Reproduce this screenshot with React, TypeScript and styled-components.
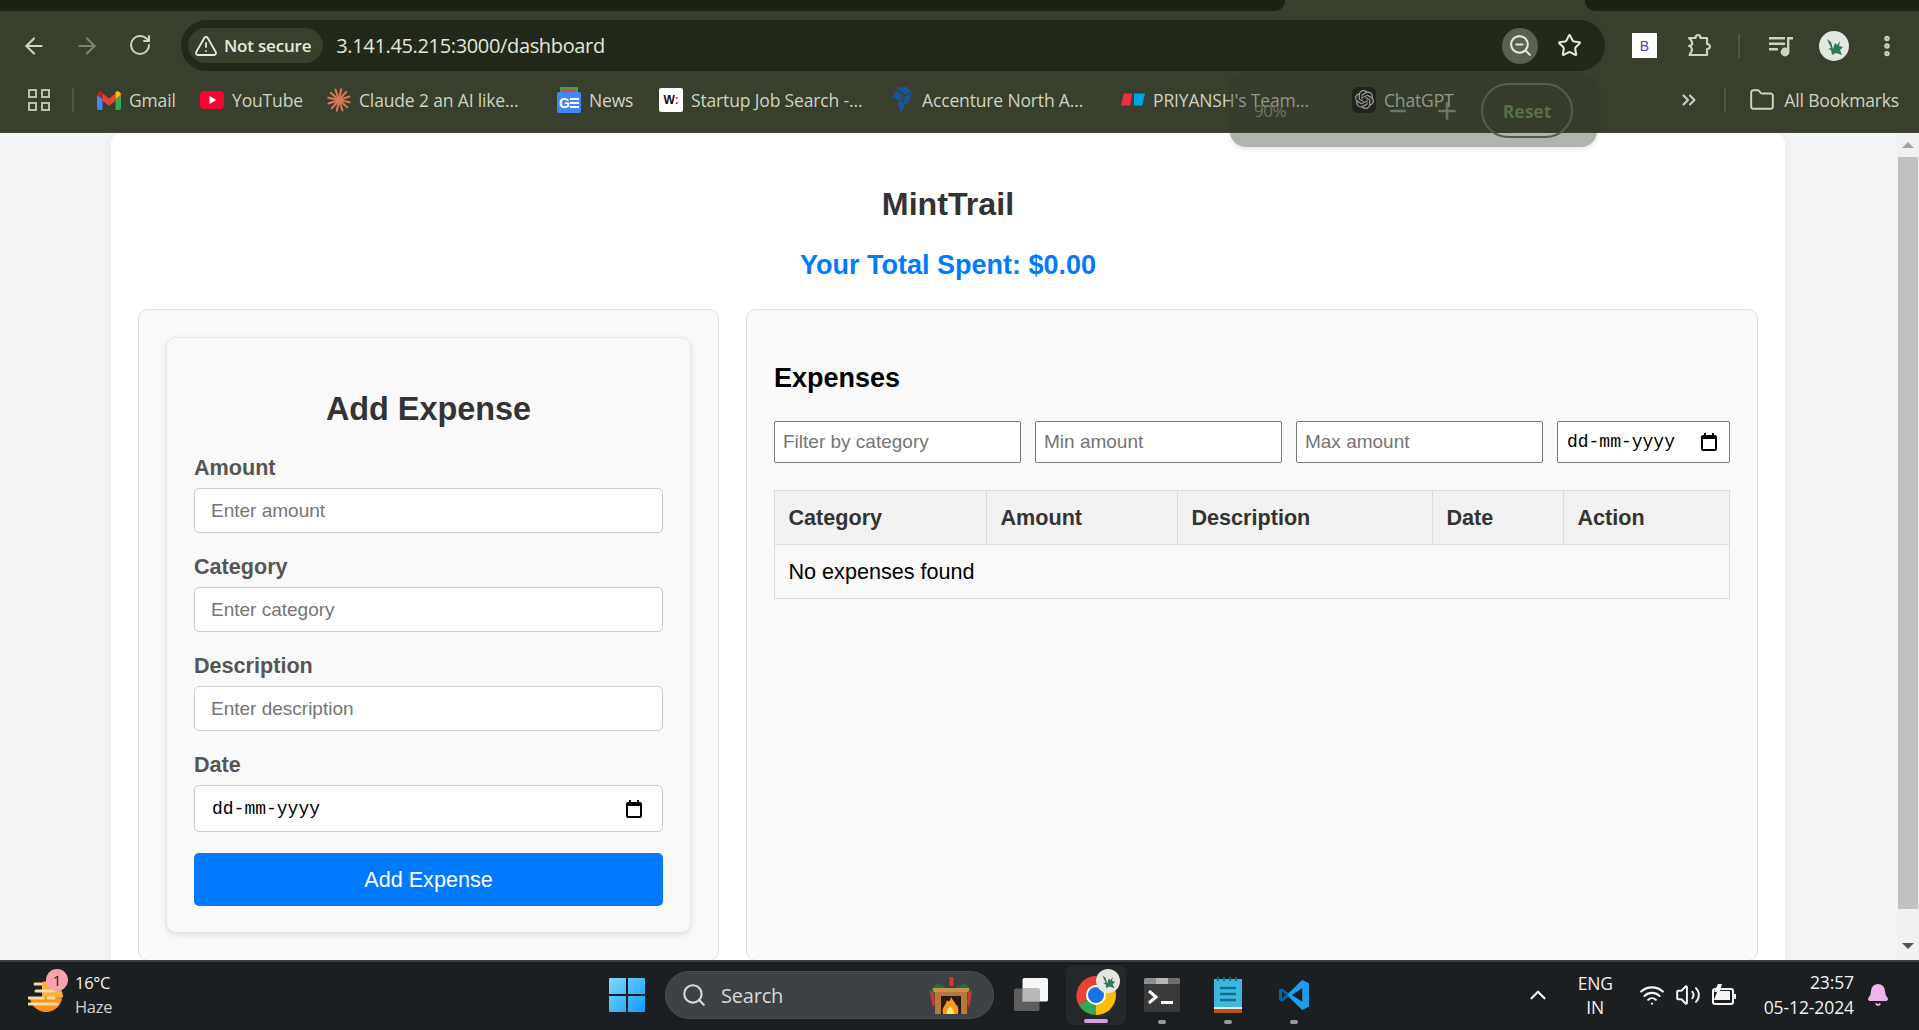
import React from 'react';
import styled, { createGlobalStyle } from 'styled-components';
import {
  ArrowLeft, ArrowRight, RotateCw, TriangleAlert, ZoomOut, Star, EllipsisVertical,
  ChevronsRight, Folder, ChevronUp, Wifi, Volume2, Bell, Search as SearchIcon, Minus, Plus,
} from 'lucide-react';
import { SiOpenai } from 'react-icons/si';

const GlobalStyle = createGlobalStyle`
  html, body, #root { margin: 0; height: 100%; }
  body { overflow: hidden; font-family: "Liberation Sans", Arial, sans-serif; background: #f4f5f7; }
  * { box-sizing: border-box; }
`;

const Frame = styled.div`
  position: relative;
  display: flex;
  flex-direction: column;
  height: 100vh;
  overflow: hidden;
`;

/* ---------- browser chrome ---------- */
const TabStrip = styled.div`
  display: flex;
  height: 11px;
  background: #383f2c;
`;
const StripDark = styled.div<{ $w?: number; $side: 'l' | 'r' }>`
  background: #1c2312;
  ${(p) => (p.$w ? `width: ${p.$w}px;` : 'flex: 1;')}
  border-radius: ${(p) => (p.$side === 'l' ? '0 0 10px 0' : '0 0 0 10px')};
`;
const TabGap = styled.div`
  width: 300px;
  background: #383f2c;
`;
const Toolbar = styled.div`
  display: flex;
  align-items: center;
  height: 60px;
  padding-top: 9px;
  background: #383f2c;
  color: #cdd3bf;
`;
const NavButton = styled.div<{ $dim?: boolean }>`
  width: 53px;
  display: flex;
  justify-content: center;
  color: ${(p) => (p.$dim ? '#7d8570' : '#cfd4c2')};
`;
const NavGroup = styled.div`
  display: flex;
  width: 181px;
  padding-left: 7px;
`;
const Omnibox = styled.div`
  display: flex;
  align-items: center;
  width: 1424px;
  height: 51px;
  border-radius: 26px;
  background: #22291a;
  padding: 0 9px 0 7px;
`;
const SecurityChip = styled.div`
  display: flex;
  align-items: center;
  gap: 6px;
  height: 35px;
  padding: 0 12px 0 6px;
  border-radius: 18px;
  background: #383f2c;
  color: #e6e9dc;
  font: 600 17px "Open Sans", sans-serif;
  letter-spacing: -0.2px;
`;
const UrlText = styled.div`
  margin-left: 13px;
  flex: 1;
  color: #e3e6da;
  font: 400 20px "Open Sans", sans-serif;
  letter-spacing: -0.35px;
`;
const ZoomBadge = styled.div`
  display: flex;
  align-items: center;
  justify-content: center;
  width: 36px;
  height: 36px;
  border-radius: 50%;
  background: #5a6150;
  color: #e3e6da;
`;
const StarBox = styled.div`
  display: flex;
  width: 62px;
  justify-content: center;
  color: #e3e6da;
  margin-right: -4px;
`;
const ToolIcons = styled.div`
  display: flex;
  align-items: center;
  flex: 1;
  padding-left: 27px;
`;
const ExtB = styled.div`
  display: flex;
  align-items: center;
  justify-content: center;
  width: 25px;
  height: 25px;
  background: #fff;
  color: #4a3fb5;
  font: 400 14px "Liberation Sans", sans-serif;
`;
const ToolSlot = styled.div<{ $ml: number }>`
  display: flex;
  margin-left: ${(p) => p.$ml}px;
  color: #cdd3bf;
`;
const VDivider = styled.div<{ $ml: number }>`
  width: 2px;
  height: 24px;
  margin-left: ${(p) => p.$ml}px;
  background: #505842;
`;
const BookmarkBar = styled.div`
  display: flex;
  align-items: center;
  height: 62px;
  padding: 0 0 4px 28px;
  background: #383f2c;
  border-bottom: 1px solid #3f4634;
`;
const BookmarkItem = styled.div<{ $w: number }>`
  display: flex;
  align-items: center;
  flex: none;
  width: ${(p) => p.$w}px;
  gap: 8px;
  color: #cfd3c4;
  font: 400 17.5px "Open Sans", sans-serif;
  letter-spacing: -0.15px;
  white-space: nowrap;
`;
const FavSlot = styled.div`
  display: flex;
  align-items: center;
  justify-content: center;
  flex: none;
  width: 24px;
  height: 24px;
`;
const BookmarkRight = styled.div`
  display: flex;
  align-items: center;
  margin-left: auto;
  color: #cfd3c4;
  padding-right: 20px;
  font: 400 17.5px "Open Sans", sans-serif;
  letter-spacing: -0.15px;
`;
const BookmarkLabel = styled.span`
  margin-left: 9px;
`;
const AppsDivider = styled(VDivider)`
  margin-right: 23px;
`;
const AppsGrid = styled.div`
  display: grid;
  grid-template-columns: 9px 9px;
  gap: 4px;
`;
const AppsCell = styled.span`
  width: 9px;
  height: 9px;
  border: 2px solid #b9bfac;
`;

/* zoom bubble */
const ZoomPopup = styled.div`
  position: absolute;
  z-index: 3;
  left: 1230px;
  top: 74px;
  width: 367px;
  height: 73px;
  border-radius: 16px;
  background: rgba(50, 55, 42, 0.38);
  box-shadow: 0 2px 5px rgba(0, 0, 0, 0.12);
  display: flex;
  align-items: center;
  color: #6f7565;
`;
const ZoomPct = styled.div`
  margin-left: 24px;
  width: 36px;
  font: 400 17px "Open Sans", sans-serif;
  letter-spacing: -0.5px;
`;
const ZoomBtn = styled.div<{ $ml: number }>`
  display: flex;
  margin-left: ${(p) => p.$ml}px;
`;
const ResetPill = styled.div`
  margin-left: 21px;
  display: flex;
  align-items: center;
  justify-content: center;
  width: 92px;
  height: 55px;
  border-radius: 28px;
  border: 2px solid #565d4a;
  color: #5a7044;
  font: 700 17.5px "Open Sans", sans-serif;
`;

/* ---------- page ---------- */
const Viewport = styled.div`
  display: flex;
  flex: 1;
  min-height: 0;
`;
const PageArea = styled.div`
  flex: 1;
  overflow: hidden;
  padding-left: 111px;
  background: #f4f5f7;
`;
const Container = styled.main`
  width: 1674px;
  min-height: 900px;
  padding: 0 27px;
  background: #fff;
  border-radius: 10px;
  box-shadow: 0 0 12px rgba(0, 0, 0, 0.06);
`;
const Title = styled.h1`
  margin: 0;
  padding-top: 53px;
  text-align: center;
  color: #333;
  font-size: 32.2px;
  line-height: 37px;
  font-weight: 700;
`;
const TotalSpent = styled.h2`
  margin: 0;
  padding-top: 27px;
  text-align: center;
  color: #007bff;
  font-size: 27px;
  line-height: 31px;
  font-weight: 700;
`;
const Columns = styled.div`
  display: flex;
  gap: 27px;
  margin-top: 28px;
`;
const Panel = styled.section<{ $w: number }>`
  flex: none;
  width: ${(p) => p.$w}px;
  height: 652px;
  padding: 27px;
  background: #f9f9f9;
  border: 1px solid #ddd;
  border-radius: 10px;
`;
const FormCard = styled.form`
  padding: 27px 27px 26px;
  background: #f9f9f9;
  border: 1px solid #e6e6e6;
  border-radius: 10px;
  box-shadow: 0 2px 6px rgba(0, 0, 0, 0.1);
`;
const FormTitle = styled.h2`
  margin: 26px 0 27px;
  text-align: center;
  color: #333;
  font-size: 32.4px;
  line-height: 37px;
  font-weight: 700;
`;
const Field = styled.div`
  margin-bottom: 21px;
`;
const FieldLabel = styled.label`
  display: block;
  margin-bottom: 8px;
  color: #555;
  font-size: 21.6px;
  line-height: 25px;
  font-weight: 700;
`;
const TextInput = styled.input`
  display: block;
  width: 100%;
  height: 45px;
  padding: 0 16px;
  background: #fff;
  border: 1px solid #ccc;
  border-radius: 5px;
  font: 400 19px "Liberation Sans", sans-serif;
  outline: none;
  &::placeholder { color: #757575; opacity: 1; }
`;
const DateBox = styled.div`
  display: flex;
  align-items: center;
  justify-content: space-between;
  width: 100%;
  height: 47px;
  padding: 0 20px 0 17px;
  background: #fff;
  border: 1px solid #ccc;
  border-radius: 5px;
  color: #000;
  font: 400 18px "Liberation Mono", monospace;
`;
const SubmitButton = styled.button`
  display: block;
  width: 100%;
  height: 53px;
  background: #007bff;
  border: 0;
  border-radius: 5px;
  color: #fff;
  font: 400 21.6px "Liberation Sans", sans-serif;
`;
const ExpensesTitle = styled.h2`
  margin: 26px 0 27px;
  color: #000;
  font-size: 27px;
  line-height: 31px;
  font-weight: 700;
`;
const Filters = styled.div`
  display: flex;
  gap: 14.4px;
  margin-bottom: 27px;
`;
const FilterInput = styled.input`
  flex: none;
  width: 246.6px;
  height: 42px;
  padding: 0 8px;
  background: #fff;
  border: 1px solid #767676;
  border-radius: 2px;
  font: 400 19px "Liberation Sans", sans-serif;
  outline: none;
  &::placeholder { color: #757575; opacity: 1; }
`;
const FilterDate = styled.div`
  display: flex;
  flex: 1;
  align-items: center;
  justify-content: space-between;
  height: 42px;
  padding: 0 12px 0 9px;
  background: #fff;
  border: 1px solid #767676;
  border-radius: 2px;
  color: #000;
  font: 400 18px "Liberation Mono", monospace;
`;
const Table = styled.table`
  width: 100%;
  table-layout: fixed;
  border-collapse: collapse;
  font-size: 21.6px;
`;
const HeadCell = styled.th<{ $w: number }>`
  width: ${(p) => p.$w}px;
  height: 54px;
  padding: 0 13.5px;
  text-align: left;
  color: #333;
  background: #f2f2f2;
  border: 1px solid #ddd;
  font-weight: 700;
`;
const BodyCell = styled.td`
  height: 54px;
  padding: 0 13.5px;
  color: #000;
  border: 1px solid #ddd;
`;

/* scrollbar */
const Scrollbar = styled.div`
  display: flex;
  flex-direction: column;
  align-items: center;
  flex: none;
  width: 22px;
  background: #f1f1f1;
`;
const ScrollArrow = styled.div<{ $down?: boolean }>`
  flex: none;
  width: 0;
  height: 0;
  margin: ${(p) => (p.$down ? '0 0 9px' : '9px 0 0')};
  border-left: 6px solid transparent;
  border-right: 6px solid transparent;
  ${(p) => (p.$down ? 'border-top: 6px solid #505050;' : 'border-bottom: 6px solid #a3a3a3;')}
`;
const ScrollThumb = styled.div`
  flex: none;
  width: 20px;
  height: 752px;
  margin: 9px 0 34px;
  background: #c1c1c1;
`;

/* ---------- taskbar ---------- */
const Taskbar = styled.footer`
  display: flex;
  align-items: center;
  flex: none;
  height: 70px;
  padding-bottom: 2px;
  background: #1c1f21;
  border-top: 2px solid #3b3e40;
  color: #f2f2f2;
  font: 400 17px "Open Sans", sans-serif;
`;
const Weather = styled.div`
  position: relative;
  display: flex;
  align-items: center;
  flex: none;
  width: 609px;
  padding-left: 28px;
  gap: 11px;
`;
const WeatherText = styled.div`
  line-height: 24px;
  font-size: 16.5px;
  letter-spacing: -0.3px;
`;
const WeatherSub = styled.div`
  color: #cfcfcf;
`;
const Badge = styled.div`
  position: absolute;
  left: 46px;
  top: -2px;
  width: 22px;
  height: 22px;
  border-radius: 50%;
  background: #f9a1ae;
  color: #222;
  font-size: 15px;
  line-height: 22px;
  text-align: center;
`;
const SearchPill = styled.div`
  display: flex;
  align-items: center;
  width: 329px;
  height: 48px;
  margin-left: 20px;
  padding: 0 18px 0 15px;
  border-radius: 24px;
  background: #3e4244;
  border: 1px solid #4a4e50;
  color: #d8d8d8;
  font-size: 20px;
  gap: 14px;
`;
const SearchLabel = styled.span`
  flex: 1;
  letter-spacing: -0.2px;
`;
const TaskSlot = styled.div<{ $ml: number; $w: number }>`
  position: relative;
  display: flex;
  align-items: center;
  justify-content: center;
  flex: none;
  margin-left: ${(p) => p.$ml}px;
  width: ${(p) => p.$w}px;
  height: 60px;
`;
const ActiveSlot = styled(TaskSlot)`
  background: #26292b;
  border-radius: 8px;
`;
const RunDot = styled.span`
  position: absolute;
  left: 50%;
  bottom: 1px;
  width: 8px;
  height: 4px;
  margin-left: -4px;
  border-radius: 2px;
  background: #9a9a9a;
`;
const ActiveBar = styled.span`
  position: absolute;
  left: 18px;
  bottom: 2px;
  width: 24px;
  height: 4px;
  border-radius: 2px;
  background: #d9a0e0;
`;
const Tray = styled.div`
  display: flex;
  align-items: center;
  flex: 1;
  justify-content: flex-end;
`;
const TrayItem = styled.div<{ $mr: number }>`
  display: flex;
  margin-right: ${(p) => p.$mr}px;
  color: #f5f5f5;
`;
const LangBlock = styled.div`
  margin-right: 26px;
  text-align: center;
  line-height: 24px;
  font-size: 17.5px;
  letter-spacing: -0.2px;
`;
const ClockBlock = styled.div`
  margin-right: 12px;
  text-align: right;
  line-height: 25px;
  font-size: 17.5px;
  letter-spacing: -0.1px;
`;

/* ---------- drawn icons ---------- */
const GmailIcon = () => (
  <svg width="24" height="20" viewBox="0 0 24 20">
    <path fill="#4285f4" d="M0 5v13a2 2 0 0 0 2 2h3.500V9z" />
    <path fill="#34a853" d="M24 5v13a2 2 0 0 1-2 2h-3.500V9z" />
    <path fill="#ea4335" d="M5.500 11V3.500L12 8.400l6.500-4.900V11L12 15.800z" />
    <path fill="#c5221f" d="M0 5c0-3 3.300-4.600 5.500-3V9z" />
    <path fill="#fbbc04" d="M24 5c0-3-3.300-4.600-5.500-3V9z" />
  </svg>
);
const YouTubeIcon = () => (
  <svg width="24" height="18" viewBox="0 0 24 18">
    <rect width="24" height="18" rx="4.500" fill="#ff0033" />
    <path fill="#fff" d="M9.500 5l7 4-7 4z" />
  </svg>
);
const ClaudeIcon = () => (
  <svg width="24" height="24" viewBox="0 0 24 24" stroke="#d97757" strokeWidth="2" strokeLinecap="round">
    {Array.from({ length: 12 }).map((_, i) => {
      const a = (i * Math.PI * 2) / 12 + 0.2;
      return <line key={i} x1={12} y1={12} x2={12 + Math.cos(a) * 11} y2={12 + Math.sin(a) * 11} />;
    })}
  </svg>
);
const NewsIcon = () => (
  <svg width="24" height="26" viewBox="0 0 24 26">
    <rect x="3" y="0" width="18" height="6" rx="1" fill="#34a853" />
    <rect x="5" y="2" width="14" height="5" fill="#ea4335" />
    <rect y="5" width="24" height="21" rx="2" fill="#4285f4" />
    <text x="2" y="21" fill="#fff" fontFamily="Liberation Sans" fontWeight="700" fontSize="14">G</text>
    <path fill="#fff" d="M13 11h9v2h-9zM13 15h9v2h-9zM13 19h9v2h-9z" />
  </svg>
);
const WSquare = styled.div`
  display: flex;
  align-items: center;
  justify-content: center;
  width: 24px;
  height: 24px;
  border-radius: 2px;
  background: #fff;
  color: #111;
  font: 700 12px "Liberation Sans", sans-serif;
`;
const WRed = styled.span`
  color: #d01f3c;
`;
const AccentureIcon = () => (
  <svg width="22" height="26" viewBox="0 0 24 30">
    <path fill="#17549b" d="M5 1l13-1 5 6-8 3zM0 11l6-7 8 6-5 6zM13 12l10-5-3 10-5 4zM7 19l5-5 3 9-4 7z" />
  </svg>
);
const MondayIcon = () => (
  <svg width="26" height="14" viewBox="0 0 26 14">
    <path fill="#f02d46" d="M3 0h9l-2 13H0z" />
    <path fill="#00a4e4" d="M14 0h12l-3 13h-9z" />
  </svg>
);
const ChatGptTile = styled.div`
  display: flex;
  align-items: center;
  justify-content: center;
  width: 24px;
  height: 26px;
  border-radius: 6px;
  background: #171717;
  color: #d9d9d9;
`;
const PuzzleIcon = () => (
  <svg width="26" height="26" viewBox="0 0 26 26" fill="none" stroke="#cdd3bf" strokeWidth="2.200" strokeLinejoin="round">
    <path d="M3 5h6.500c0-4 5-4 5 0H21v6c3.800 0 3.800 5 0 5v6H3.500l2-3.500c1.200-2.500 0-5-2.500-5.500l2.500-1C7 11 6 7 3 5z" />
  </svg>
);
const MediaIcon = () => (
  <svg width="26" height="24" viewBox="0 0 26 24" fill="#cdd3bf">
    <rect x="1" y="3" width="16" height="2.500" />
    <rect x="1" y="8.500" width="16" height="2.500" />
    <rect x="1" y="14" width="9" height="2.500" />
    <rect x="19" y="3" width="2.400" height="15" />
    <rect x="19" y="3" width="6" height="2.500" />
    <circle cx="17" cy="18" r="4.400" />
  </svg>
);
const CalendarIcon = () => (
  <svg width="16" height="18" viewBox="0 0 16 18">
    <path fill="#000" d="M3 0h2v2h6V0h2v2h1a2 2 0 0 1 2 2v12a2 2 0 0 1-2 2H2a2 2 0 0 1-2-2V4a2 2 0 0 1 2-2h1zM2 6v10h12V6z" />
  </svg>
);
const AvatarIcon = ({ size }: { size: number }) => (
  <svg width={size} height={size} viewBox="0 0 30 30">
    <circle cx="15" cy="15" r="15" fill="#e4e6e2" />
    <path fill="#2c7a57" d="M8 8l4 3 2 7 2-6 2 2 3-4-1 5 4 1-3 3 2 5-6-2-4 2-1-5-3-1 3-1z" />
  </svg>
);
const WeatherIcon = () => (
  <svg width="36" height="34" viewBox="0 0 36 34">
    <path fill="#f5941d" d="M2 19h32c0 8-7 15-16 15S2 27 2 19z" />
    <path fill="#f7b23b" d="M14 4a16 16 0 0 1 21 15H14z" />
    <path fill="none" stroke="#f4dd9c" strokeWidth="3" strokeLinecap="round" d="M7 6h6M8 13h18M1 20h14M20 20h6M1 26h28" />
  </svg>
);
const WindowsIcon = () => (
  <svg width="36" height="36" viewBox="0 0 36 36">
    <defs>
      <linearGradient id="winG" x1="0" y1="0" x2="1" y2="1">
        <stop offset="0" stopColor="#7fd8ff" />
        <stop offset="1" stopColor="#0f9bfa" />
      </linearGradient>
    </defs>
    <path fill="url(#winG)" d="M1 1h16v16H0V2a1 1 0 0 1 1-1zM19 1h16a1 1 0 0 1 1 1v15H19zM0 19h17v16H1a1 1 0 0 1-1-1zM19 19h17v15a1 1 0 0 1-1 1H19z" />
  </svg>
);
const FireplaceIcon = () => (
  <svg width="48" height="38" viewBox="0 0 48 38">
    <path fill="#2f6b3c" d="M2 16l8-9 12 6H26l12-6 8 9-5 4-5-5H12l-5 5z" />
    <rect x="22.500" y="1" width="4" height="9" rx="1" fill="#d8392b" />
    <rect x="6" y="12" width="36" height="4" fill="#c9924f" />
    <rect x="8" y="16" width="32" height="22" fill="#b5793c" />
    <rect x="14" y="20" width="20" height="18" fill="#2a1a10" />
    <path fill="#f59a1f" d="M16 38c-2-7 3-8 4-14 2 3 3 1 4-3 3 5 4 5 5 8 2 0 3 5 2 9z" />
    <path fill="#ffe27a" d="M20 38c-1-4 2-5 3-8 2 3 5 4 4 8z" />
    <path fill="#c93a2a" d="M3 17l4-2 1 12-2 5zM45 17l-4-2-1 12 2 5z" />
  </svg>
);
const TaskViewIcon = () => (
  <svg width="36" height="34" viewBox="0 0 36 36">
    <rect x="9" y="0" width="27" height="25" rx="2" fill="#f6f6f6" />
    <rect x="0" y="11" width="27" height="24" rx="2" fill="#6a6a6a" fillOpacity="0.85" />
    <rect x="9" y="11" width="18" height="14" fill="#b9b9b9" />
  </svg>
);
const ChromeIcon = () => (
  <svg width="48" height="48" viewBox="0 0 48 48">
    <path fill="#ea4335" d="M24 24L41.300 14A20 20 0 0 0 6.700 34Z" />
    <path fill="#fbbc04" d="M24 24L41.300 14A20 20 0 0 1 24 44Z" />
    <path fill="#34a853" d="M24 24L24 44A20 20 0 0 1 6.700 34Z" />
    <circle cx="24" cy="24" r="10" fill="#fff" />
    <circle cx="24" cy="24" r="8" fill="#1a73e8" />
  </svg>
);
const ChromeBadge = styled.div`
  position: absolute;
  right: 6px;
  top: 4px;
  display: flex;
`;
const TerminalIcon = () => (
  <svg width="36" height="34" viewBox="0 0 36 34">
    <rect width="36" height="34" rx="2" fill="#3a3a3a" />
    <path fill="#8f8f8f" d="M0 2a2 2 0 0 1 2-2h10v6H0z" />
    <path fill="#b5b5b5" d="M12 0h12v6H12z" />
    <path fill="#6f6f6f" d="M24 0h10a2 2 0 0 1 2 2v4H24z" />
    <path fill="none" stroke="#fff" strokeWidth="3" d="M5 13l7 6-7 6" />
    <rect x="17" y="23" width="12" height="3" fill="#fff" />
  </svg>
);
const NotepadIcon = () => (
  <svg width="28" height="36" viewBox="0 0 28 36">
    <rect y="2" width="28" height="30" fill="#3fb8de" />
    <rect y="30" width="28" height="2" fill="#e9e9e9" />
    <rect y="32" width="28" height="4" fill="#b3561a" />
    <path stroke="#0e6f96" strokeWidth="2" d="M4 0v4M10 0v4M16 0v4M22 0v4" />
    <path stroke="#0e6f96" strokeWidth="2.500" d="M6 11h16M6 17h16M6 23h16" />
  </svg>
);
const VsCodeIcon = () => (
  <svg width="38" height="40" viewBox="0 0 24 24">
    <path fill="#0065a9" d="M17.500 2 8.200 10.700 4 7.500 2 8.500v7l2 1 4.200-3.200L17.500 22z" />
    <path fill="#1f9cf0" d="M17.500 2 22 4.200v15.600L17.500 22 7.500 12z" />
    <path fill="#1c1f21" d="M17.500 7.500 10.700 12l6.800 4.500zM4 9.500 6.300 12 4 14.500z" />
  </svg>
);
const BatteryIcon = () => (
  <svg width="24" height="22" viewBox="0 0 24 22" fill="none" stroke="#f5f5f5" strokeWidth="2">
    <rect x="1" y="5" width="20" height="15" rx="2" />
    <rect x="21" y="10" width="3" height="5" fill="#f5f5f5" stroke="none" />
    <path fill="#f5f5f5" stroke="none" d="M6 0 2 8h3l-3 8 16 0V7H8l2-7z" />
  </svg>
);

const bookmarks = [
  { w: 103, label: 'Gmail', icon: <GmailIcon /> },
  { w: 127, label: 'YouTube', icon: <YouTubeIcon /> },
  { w: 230, label: 'Claude 2 an AI like...', icon: <ClaudeIcon /> },
  { w: 102, label: 'News', icon: <NewsIcon /> },
  { w: 231, label: 'Startup Job Search -...', icon: <WSquare>W<WRed>:</WRed></WSquare> },
  { w: 231, label: 'Accenture North A...', icon: <AccentureIcon /> },
  { w: 231, label: "PRIYANSH's Team...", icon: <MondayIcon /> },
  { w: 110, label: 'ChatGPT', icon: <ChatGptTile><SiOpenai size={19} /></ChatGptTile> },
];

const fields = [
  { label: 'Amount', placeholder: 'Enter amount' },
  { label: 'Category', placeholder: 'Enter category' },
  { label: 'Description', placeholder: 'Enter description' },
];

const columns = [
  { w: 212, label: 'Category' },
  { w: 191, label: 'Amount' },
  { w: 255, label: 'Description' },
  { w: 131, label: 'Date' },
  { w: 166, label: 'Action' },
];

export default function App() {
  return (
    <Frame>
      <GlobalStyle />
      <TabStrip>
        <StripDark $w={1285} $side="l" />
        <TabGap />
        <StripDark $side="r" />
      </TabStrip>
      <Toolbar>
        <NavGroup>
          <NavButton><ArrowLeft size={26} strokeWidth={2} /></NavButton>
          <NavButton $dim><ArrowRight size={26} strokeWidth={2} /></NavButton>
          <NavButton><RotateCw size={24} strokeWidth={2} /></NavButton>
        </NavGroup>
        <Omnibox>
          <SecurityChip><TriangleAlert size={24} strokeWidth={1.8} />Not secure</SecurityChip>
          <UrlText>3.141.45.215:3000/dashboard</UrlText>
          <ZoomBadge><ZoomOut size={25} strokeWidth={2} /></ZoomBadge>
          <StarBox><Star size={25} strokeWidth={2} /></StarBox>
        </Omnibox>
        <ToolIcons>
          <ExtB>B</ExtB>
          <ToolSlot $ml={29}><PuzzleIcon /></ToolSlot>
          <VDivider $ml={26} />
          <ToolSlot $ml={28}><MediaIcon /></ToolSlot>
          <ToolSlot $ml={25}><AvatarIcon size={30} /></ToolSlot>
          <ToolSlot $ml={25}><EllipsisVertical size={26} strokeWidth={3} /></ToolSlot>
        </ToolIcons>
      </Toolbar>
      <BookmarkBar>
        <AppsGrid>
          <AppsCell /><AppsCell /><AppsCell /><AppsCell />
        </AppsGrid>
        <AppsDivider $ml={22} />
        {bookmarks.map((b) => (
          <BookmarkItem key={b.label} $w={b.w}>
            <FavSlot>{b.icon}</FavSlot>
            {b.label}
          </BookmarkItem>
        ))}
        <BookmarkRight>
          <ChevronsRight size={22} strokeWidth={2.2} />
          <VDivider $ml={24} />
          <ToolSlot $ml={23}><Folder size={26} strokeWidth={1.8} /></ToolSlot>
          <BookmarkLabel>All Bookmarks</BookmarkLabel>
        </BookmarkRight>
      </BookmarkBar>
      <ZoomPopup>
        <ZoomPct>90%</ZoomPct>
        <ZoomBtn $ml={96}><Minus size={24} strokeWidth={2.4} /></ZoomBtn>
        <ZoomBtn $ml={24}><Plus size={26} strokeWidth={2.4} /></ZoomBtn>
        <ResetPill>Reset</ResetPill>
      </ZoomPopup>

      <Viewport>
        <PageArea>
          <Container>
            <Title>MintTrail</Title>
            <TotalSpent>Your Total Spent: $0.00</TotalSpent>
            <Columns>
              <Panel $w={581}>
                <FormCard>
                  <FormTitle>Add Expense</FormTitle>
                  {fields.map((f) => (
                    <Field key={f.label}>
                      <FieldLabel>{f.label}</FieldLabel>
                      <TextInput placeholder={f.placeholder} />
                    </Field>
                  ))}
                  <Field>
                    <FieldLabel>Date</FieldLabel>
                    <DateBox>dd-mm-yyyy<CalendarIcon /></DateBox>
                  </Field>
                  <SubmitButton type="button">Add Expense</SubmitButton>
                </FormCard>
              </Panel>
              <Panel $w={1012}>
                <ExpensesTitle>Expenses</ExpensesTitle>
                <Filters>
                  <FilterInput placeholder="Filter by category" />
                  <FilterInput placeholder="Min amount" />
                  <FilterInput placeholder="Max amount" />
                  <FilterDate>dd-mm-yyyy<CalendarIcon /></FilterDate>
                </Filters>
                <Table>
                  <thead>
                    <tr>
                      {columns.map((c) => (
                        <HeadCell key={c.label} $w={c.w}>{c.label}</HeadCell>
                      ))}
                    </tr>
                  </thead>
                  <tbody>
                    <tr>
                      <BodyCell colSpan={5}>No expenses found</BodyCell>
                    </tr>
                  </tbody>
                </Table>
              </Panel>
            </Columns>
          </Container>
        </PageArea>
        <Scrollbar>
          <ScrollArrow />
          <ScrollThumb />
          <ScrollArrow $down />
        </Scrollbar>
      </Viewport>

      <Taskbar>
        <Weather>
          <WeatherIcon />
          <Badge>1</Badge>
          <WeatherText>
            16°C
            <WeatherSub>Haze</WeatherSub>
          </WeatherText>
        </Weather>
        <WindowsIcon />
        <SearchPill>
          <SearchIcon size={26} strokeWidth={2} />
          <SearchLabel>Search</SearchLabel>
          <FireplaceIcon />
        </SearchPill>
        <TaskSlot $ml={18} $w={38}><TaskViewIcon /></TaskSlot>
        <ActiveSlot $ml={16} $w={60}>
          <ChromeIcon />
          <ChromeBadge><AvatarIcon size={24} /></ChromeBadge>
          <ActiveBar />
        </ActiveSlot>
        <TaskSlot $ml={18} $w={36}><TerminalIcon /><RunDot /></TaskSlot>
        <TaskSlot $ml={34} $w={28}><NotepadIcon /><RunDot /></TaskSlot>
        <TaskSlot $ml={34} $w={36}><VsCodeIcon /><RunDot /></TaskSlot>
        <Tray>
          <TrayItem $mr={27}><ChevronUp size={26} strokeWidth={2} /></TrayItem>
          <LangBlock>ENG<br />IN</LangBlock>
          <TrayItem $mr={10}><Wifi size={26} strokeWidth={2} /></TrayItem>
          <TrayItem $mr={11}><Volume2 size={26} strokeWidth={1.8} /></TrayItem>
          <TrayItem $mr={28}><BatteryIcon /></TrayItem>
          <ClockBlock>23:57<br />05-12-2024</ClockBlock>
          <TrayItem $mr={29}><Bell size={24} fill="#ecb6ec" color="#ecb6ec" /></TrayItem>
        </Tray>
      </Taskbar>
    </Frame>
  );
}
